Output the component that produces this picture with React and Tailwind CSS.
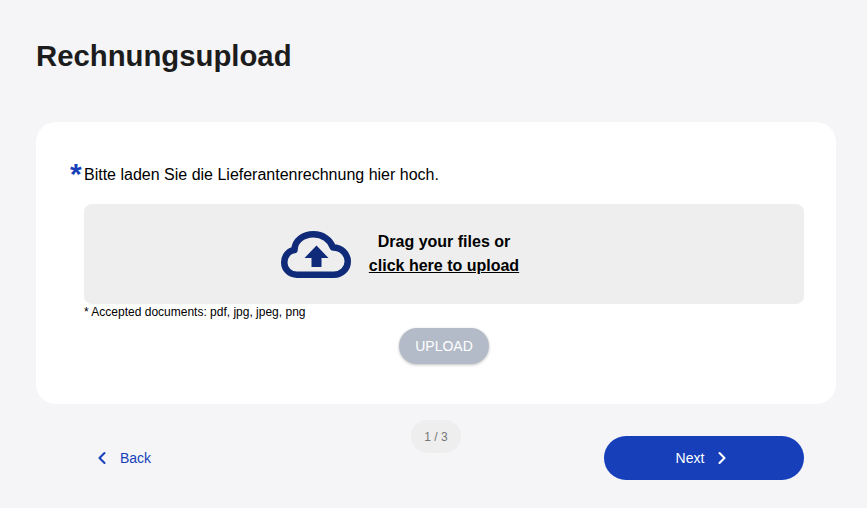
import { ChevronLeft, ChevronRight } from "lucide-react";

function CloudIcon() {
  return (
    <svg width="70" height="47" viewBox="0 0 70 47" fill="none">
      <path
        d="M17 43.750H16C9 43.750 3.250 38.500 3.250 31.500C3.250 24.500 8 19.500 13.500 19C13.500 9.500 22.500 3.250 32.500 3.250C41.500 3.250 49 8.500 52 16.500C60.500 16.500 66.750 23 66.750 30.500C66.750 38 60.500 43.750 53 43.750H17Z"
        stroke="#0f2a78"
        strokeWidth="6.500"
        strokeLinejoin="round"
      />
      <path d="M35.500 14.500L47.500 27H40.500V36H30.500V27H23.500L35.500 14.500Z" fill="#0f2a78" />
    </svg>
  );
}

export default function App() {
  return (
    <div className="h-[508px] w-[867px] overflow-hidden bg-[#f5f5f8] pt-[38px] pr-[31px] pl-9 font-['Liberation_Sans',Arial,sans-serif] text-black">
      <h1 className="text-[29.3px] leading-[36px] font-bold text-[#1c1c1c]">Rechnungsupload</h1>

      {/* Upload card */}
      <div className="mt-[48px] h-[282px] rounded-[20px] bg-white pt-[36px] pr-8 pl-[34px]">
        <div className="flex h-[30px] items-start">
          <span className="mt-[2px] w-[14px] text-[30px] leading-[28px] font-bold text-[#163fb9]">*</span>
          <span className="mt-2 text-base leading-[18px]">Bitte laden Sie die Lieferantenrechnung hier hoch.</span>
        </div>
        <div className="mt-4 ml-[14px]">
          <div className="grid h-[100px] grid-cols-[1fr_auto_1fr] items-center gap-[18px] rounded-lg bg-[#eeeeee]">
            <div className="justify-self-end">
              <CloudIcon />
            </div>
            <div className="text-center text-base leading-6 font-bold">
              <p>Drag your files or</p>
              <p className="underline">click here to upload</p>
            </div>
          </div>
          <p className="mt-[1px] text-xs leading-[14px]">* Accepted documents: pdf, jpg, jpeg, png</p>
          <div className="mt-[9px] flex justify-center">
            <button className="h-9 w-[90px] rounded-[18px] bg-[#b4bbc8] text-sm text-white shadow-[0_1px_3px_rgba(0,0,0,0.25)]">
              UPLOAD
            </button>
          </div>
        </div>
      </div>

      {/* Footer nav */}
      <div className="mt-4 grid grid-cols-[1fr_auto_1fr] items-start">
        <button className="mt-[23px] ml-[56px] flex h-[30px] items-center gap-2 justify-self-start text-sm text-[#163fb9]">
          <ChevronLeft size={20} strokeWidth={2.500} />
          Back
        </button>
        <div className="flex h-[33px] w-[50px] items-center justify-center rounded-[16px] bg-[#eeeeee] text-xs text-[#777777]">
          1 / 3
        </div>
        <button className="mt-4 mr-8 flex h-11 w-[200px] items-center justify-center gap-2 justify-self-end rounded-[22px] bg-[#163fb9] text-sm text-white">
          Next
          <ChevronRight size={20} strokeWidth={2.500} />
        </button>
      </div>
    </div>
  );
}
